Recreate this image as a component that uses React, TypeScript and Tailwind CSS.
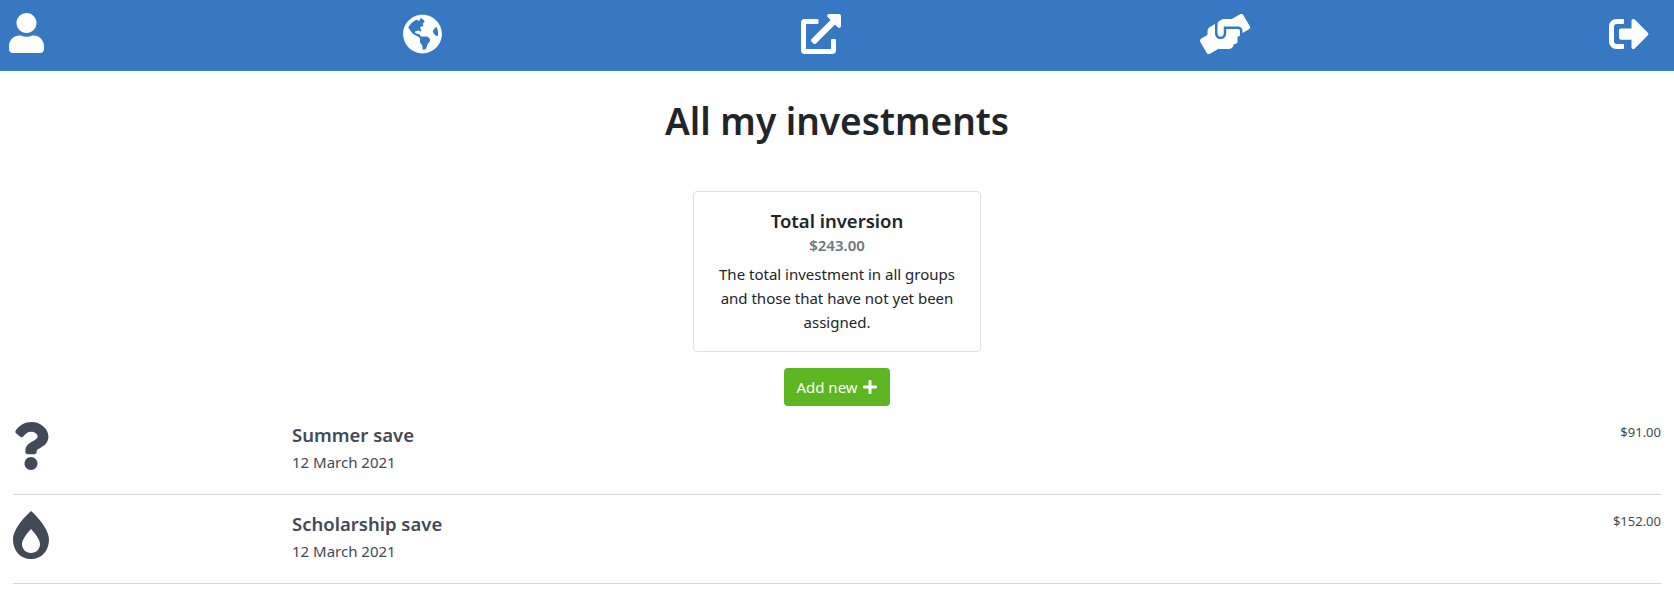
import { FaUser, FaGlobeAmericas, FaExternalLinkAlt, FaHandsHelping, FaSignOutAlt, FaPlus, FaQuestion, FaBurn } from "react-icons/fa";

const font = "font-['Noto_Sans','Open_Sans',sans-serif]";

const saves = [
  { name: "Summer save", date: "12 March 2021", amount: "$91.00", Icon: FaQuestion },
  { name: "Scholarship save", date: "12 March 2021", amount: "$152.00", Icon: FaBurn },
];

export default function App() {
  return (
    <div className={`min-h-[596px] bg-white text-[#212529] ${font}`}>
      {/* NAV */}
      <nav className="flex h-[71px] items-center justify-between bg-[#3778c2] pr-[25px] pb-[4px] pl-[9px] text-white">
        <FaUser className="-mt-[2px] h-10 w-[35px]" />
        <FaGlobeAmericas className="h-10 w-[39px]" />
        <FaExternalLinkAlt className="h-10 w-10" />
        <FaHandsHelping className="h-10 w-[50px]" />
        <FaSignOutAlt className="h-10 w-10" />
      </nav>

      <h1 className="mt-[26px] text-center text-[37px] leading-[48px] font-semibold">All my investments</h1>

      <div className="mx-auto mt-[46px] h-[161px] w-[288px] rounded border border-[#dfdfdf] px-5 pt-[17px] text-center">
        <h5 className="text-[18.5px] leading-6 font-semibold">Total inversion</h5>
        <h6 className="mt-[3px] text-[15px] leading-[19px] font-semibold text-[#6c757d]">$243.00</h6>
        <p className="mt-[7px] text-[15px] leading-6">
          The total investment in all groups and those that have not yet been assigned.
        </p>
      </div>

      <div className="mt-4 flex justify-center">
        <button className="flex h-[38px] w-[106px] items-center justify-center gap-1 rounded bg-[#5cb521] text-[15px] text-white">
          Add new <FaPlus className="h-4 w-4" />
        </button>
      </div>

      <div className="px-[13px]">
        {saves.map(({ name, date, amount, Icon }) => (
          <div key={name} className="flex h-[89px] border-b border-[#d6d6d6]">
            <div className="w-[279px] pt-[16px]">
              <Icon className="h-12 w-9 text-[#414a56]" />
            </div>
            <div className="flex-1 pt-[17px] text-[#414a56]">
              <h5 className="text-[18.5px] leading-6 font-semibold">{name}</h5>
              <p className="mt-[3px] text-[15px] leading-6">{date}</p>
            </div>
            <span className="pt-[16px] text-[13px] leading-5 text-[#414a56]">{amount}</span>
          </div>
        ))}
      </div>
    </div>
  );
}
